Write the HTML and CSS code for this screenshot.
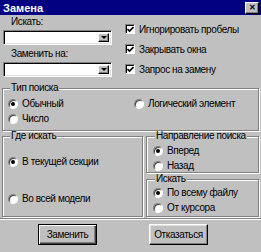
FILE: index.html
```html
<!doctype html>
<html lang="ru">
  <head>
    <meta charset="UTF-8">
    <title>Замена</title>
    <link rel="stylesheet" href="styles.css">
  </head>
  <body>
    <div class="dialog">
      <div class="titlebar">
        <span class="title">Замена</span>
        <span class="close">&#x2715;</span>
      </div>

      <!-- Search / replace fields and options -->
      <div class="top">
        <div class="fields">
          <div class="field-label">Искать:</div>
          <div class="combo"><span class="combo-input"></span><span class="combo-btn"><i class="arrow"></i></span></div>
          <div class="field-label second">Заменить на:</div>
          <div class="combo"><span class="combo-input"></span><span class="combo-btn"><i class="arrow"></i></span></div>
        </div>
        <div class="options">
          <div class="check"><span class="box"><svg width="7" height="7" viewBox="0 0 7 7"><polyline points="0.5,3 2.5,5 6.5,1" fill="none" stroke="#000" stroke-width="1.6"/></svg></span>Игнорировать пробелы</div>
          <div class="check"><span class="box"><svg width="7" height="7" viewBox="0 0 7 7"><polyline points="0.5,3 2.5,5 6.5,1" fill="none" stroke="#000" stroke-width="1.6"/></svg></span>Закрывать окна</div>
          <div class="check"><span class="box"><svg width="7" height="7" viewBox="0 0 7 7"><polyline points="0.5,3 2.5,5 6.5,1" fill="none" stroke="#000" stroke-width="1.6"/></svg></span>Запрос на замену</div>
        </div>
      </div>

      <!-- Search type -->
      <fieldset class="group group-type">
        <legend>Тип поиска</legend>
        <div class="type-grid">
          <div class="radio"><span class="dot checked"></span>Обычный</div>
          <div class="radio"><span class="dot"></span>Логический элемент</div>
          <div class="radio"><span class="dot"></span>Число</div>
        </div>
      </fieldset>

      <div class="middle">
        <fieldset class="group group-where">
          <legend>Где искать</legend>
          <div class="radio"><span class="dot checked"></span>В текущей секции</div>
          <div class="radio"><span class="dot"></span>Во всей модели</div>
        </fieldset>
        <div class="right-groups">
          <fieldset class="group group-dir">
            <legend>Направление поиска</legend>
            <div class="radio"><span class="dot checked"></span>Вперед</div>
            <div class="radio"><span class="dot"></span>Назад</div>
          </fieldset>
          <fieldset class="group group-scope">
            <legend>Искать</legend>
            <div class="radio"><span class="dot checked"></span>По всему файлу</div>
            <div class="radio"><span class="dot"></span>От курсора</div>
          </fieldset>
        </div>
      </div>

      <div class="buttons">
        <button class="btn btn-default">Заменить</button>
        <button class="btn">Отказаться</button>
      </div>
    </div>
  </body>
</html>
```

FILE: styles.css
```css
* {
  box-sizing: border-box;
}
body {
  margin: 0;
  font-family: "Liberation Sans", Arial, sans-serif;
  font-size: 10px;
  letter-spacing: -0.4px;
  color: #000;
  background: #c0c0c0;
}
.dialog {
  width: 261px;
  height: 252px;
  background: #c0c0c0;
  display: flex;
  flex-direction: column;
}
.titlebar {
  height: 15px;
  background: #000080;
  color: #fff;
  display: flex;
  align-items: center;
  justify-content: space-between;
  padding: 0 2px 0 3px;
}
.title {
  font-size: 11px;
  font-weight: bold;
  letter-spacing: 0;
}
.close {
  width: 14px;
  height: 12px;
  background: #c0c0c0;
  color: #000;
  border-top: 1px solid #fff;
  border-left: 1px solid #fff;
  border-right: 1px solid #000;
  border-bottom: 1px solid #000;
  box-shadow: inset -1px -1px 0 #808080;
  display: flex;
  align-items: center;
  justify-content: center;
  font-size: 8px;
  font-weight: bold;
  line-height: 1;
}

/* top area */
.top {
  height: 69px;
  display: flex;
}
.fields {
  width: 112px;
  padding-left: 3px;
}
.field-label {
  height: 15px;
  line-height: 14px;
  padding-left: 8px;
}
.field-label.second {
  height: 17px;
  line-height: 17px;
}
.combo {
  height: 15px;
  display: flex;
  background: #fff;
  border: 1px solid;
  border-color: #808080 #fff #fff #808080;
  box-shadow: inset 1px 1px 0 #000, inset -1px -1px 0 #dfdfdf;
  padding: 2px;
}
.combo-input {
  flex: 1;
}
.combo-btn {
  width: 11px;
  height: 9px;
  background: #c0c0c0;
  border: 1px solid;
  border-color: #fff #000 #000 #fff;
  box-shadow: inset -1px -1px 0 #808080;
  display: flex;
  align-items: center;
  justify-content: center;
}
.arrow {
  width: 0;
  height: 0;
  border-left: 3px solid transparent;
  border-right: 3px solid transparent;
  border-top: 3px solid #000;
}
.options {
  padding: 4px 0 0 13px;
}
.check {
  height: 20px;
  display: flex;
  align-items: center;
  white-space: nowrap;
}
.box {
  width: 10px;
  height: 10px;
  margin-right: 4px;
  background: #fff;
  border: 1px solid;
  border-color: #808080 #fff #fff #808080;
  box-shadow: inset 1px 1px 0 #000;
  display: flex;
  align-items: center;
  justify-content: center;
  padding: 1px 0 0 1px;
}
.box svg {
  display: block;
}

/* group boxes */
.group {
  margin: 0;
  padding: 0;
  min-width: 0;
  border: 1px solid #808080;
  box-shadow: inset 1px 1px 0 #fff, 1px 1px 0 #fff;
}
.group legend {
  padding: 0 1px;
  margin-left: 2px;
  line-height: 8px;
  background: #c0c0c0;
}
.radio {
  height: 15px;
  display: flex;
  align-items: center;
  white-space: nowrap;
}
.dot {
  width: 10px;
  height: 10px;
  margin-right: 4px;
  border-radius: 50%;
  background: #fff;
  border: 1px solid;
  border-color: #808080 #fff #fff #808080;
  box-shadow: inset 1px 1px 0 #404040;
  display: flex;
  align-items: center;
  justify-content: center;
}
.dot.checked::after {
  content: "";
  width: 4px;
  height: 4px;
  border-radius: 50%;
  background: #000;
}
.group-type {
  margin: 0 2px;
  height: 47px;
  padding: 4px 0 4px 5px;
}
.type-grid {
  display: grid;
  grid-template-columns: 126px 1fr;
}
.middle {
  display: flex;
  gap: 3px;
  padding: 1px 2px 0;
}
.group-where {
  width: 141px;
  height: 85px;
  padding: 14px 0 0 5px;
  display: flex;
  flex-direction: column;
  gap: 22px;
}
.right-groups {
  flex: 1;
  display: flex;
  flex-direction: column;
}
.group-dir {
  height: 41px;
  padding: 3px 0 0 6px;
}
.group-scope {
  margin-top: 2px;
  height: 42px;
  padding: 2px 0 0 6px;
}

/* buttons */
.buttons {
  margin-top: 1px;
  border-top: 1px solid #808080;
  box-shadow: inset 0 1px 0 #fff;
  padding: 5px 0 0 38px;
  display: flex;
  gap: 52px;
}
.btn {
  width: 59px;
  height: 21px;
  font-family: inherit;
  font-size: 10px;
  letter-spacing: -0.4px;
  background: #c0c0c0;
  border: 1px solid;
  border-color: #fff #000 #000 #fff;
  box-shadow: inset -1px -1px 0 #808080, inset 1px 1px 0 #dfdfdf;
  padding: 0;
}
.btn-default {
  border: 1px solid #000;
  box-shadow: inset 1px 1px 0 #fff, inset -1px -1px 0 #404040, inset -2px -2px 0 #808080;
}
```
